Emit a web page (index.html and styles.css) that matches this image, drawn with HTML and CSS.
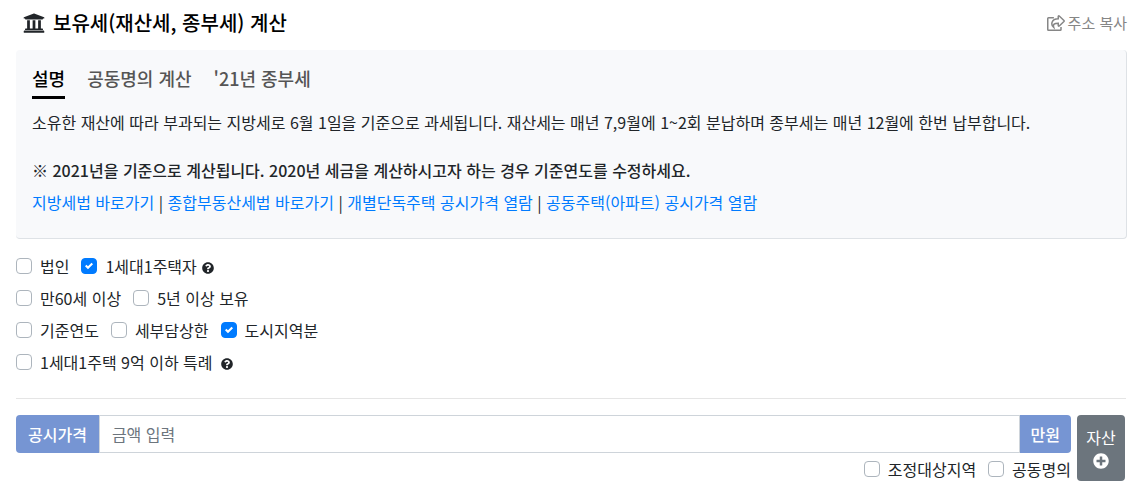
FILE: index.html
```
<!DOCTYPE html>
<html lang="ko">
<head>
<meta charset="utf-8">
<meta name="viewport" content="width=device-width, initial-scale=1">
<title>보유세(재산세, 종부세) 계산</title>
<link rel="stylesheet" href="styles.css">
</head>
<body>
<svg class="sprite" aria-hidden="true">
  <symbol id="help" viewBox="0 0 512 512"><path d="M504 256c0 136.997-111.043 248-248 248S8 392.997 8 256C8 119.083 119.043 8 256 8s248 111.083 248 248zM262.655 90c-54.497 0-89.255 22.957-116.549 63.758-3.536 5.286-2.353 12.415 2.715 16.258l34.699 26.31c5.205 3.947 12.621 3.008 16.665-2.122 17.864-22.658 30.113-35.797 57.303-35.797 20.429 0 45.698 13.148 45.698 32.958 0 14.976-12.363 22.667-32.534 33.976C247.128 238.528 216 254.941 216 296v4c0 6.627 5.373 12 12 12h56c6.627 0 12-5.373 12-12v-1.333c0-28.462 83.186-29.647 83.186-106.667 0-58.002-60.165-102-116.531-102zM256 338c-25.365 0-46 20.635-46 46 0 25.364 20.635 46 46 46s46-20.636 46-46c0-25.365-20.635-46-46-46z"/></symbol>
</svg>
<header class="header">
  <h1 class="title">
    <svg class="title-icon" viewBox="0 0 512 512" aria-hidden="true"><path d="M496 128v16a8 8 0 0 1-8 8h-24v12c0 6.627-5.373 12-12 12H60c-6.627 0-12-5.373-12-12v-12H24a8 8 0 0 1-8-8v-16a8 8 0 0 1 4.941-7.392l232-88a7.996 7.996 0 0 1 6.118 0l232 88A8 8 0 0 1 496 128zm-24 304H40c-13.255 0-24 10.745-24 24v16a8 8 0 0 0 8 8h464a8 8 0 0 0 8-8v-16c0-13.255-10.745-24-24-24zM96 192v192H60c-6.627 0-12 5.373-12 12v20h416v-20c0-6.627-5.373-12-12-12h-36V192h-64v192h-64V192h-64v192h-64V192H96z"/></svg>
    보유세(재산세, 종부세) 계산
  </h1>
  <button class="copy" type="button">
    <svg class="copy-icon" viewBox="0 0 576 512" aria-hidden="true"><path d="M220 88H48a24 24 0 0 0-24 24v352a24 24 0 0 0 24 24h376a24 24 0 0 0 24-24v-84M360 48c0-20 18-28 32-16l150 142c12 12 12 24 0 36L392 352c-14 12-32 4-32-16v-72c-130 0-176 28-144 136-100-80-90-272 144-280z"/></svg>
    주소 복사
  </button>
</header>
<main>
  <section class="card">
    <nav class="tabs">
      <a class="tab tab-active" href="#info">설명</a>
      <a class="tab" href="#joint">공동명의 계산</a>
      <a class="tab" href="#tax21">'21년 종부세</a>
    </nav>
    <div id="info">
      <p class="text">소유한 재산에 따라 부과되는 지방세로 6월 1일을 기준으로 과세됩니다. 재산세는 매년 7,9월에 1~2회 분납하며 종부세는 매년 12월에 한번 납부합니다.</p>
      <p class="text notice">※ 2021년을 기준으로 계산됩니다. 2020년 세금을 계산하시고자 하는 경우 기준연도를 수정하세요.</p>
      <p class="text links"><a href="#law1">지방세법 바로가기</a> | <a href="#law2">종합부동산세법 바로가기</a> | <a href="#price1">개별단독주택 공시가격 열람</a> | <a href="#price2">공동주택(아파트) 공시가격 열람</a></p>
    </div>
  </section>
  <form class="form">
    <div class="options">
      <div class="row">
        <label class="check"><input type="checkbox">법인</label>
        <label class="check"><input type="checkbox" checked>1세대1주택자<svg class="help" role="img" aria-label="도움말"><use href="#help"/></svg></label>
      </div>
      <div class="row">
        <label class="check"><input type="checkbox">만60세 이상</label>
        <label class="check"><input type="checkbox">5년 이상 보유</label>
      </div>
      <div class="row">
        <label class="check"><input type="checkbox">기준연도</label>
        <label class="check"><input type="checkbox">세부담상한</label>
        <label class="check"><input type="checkbox" checked>도시지역분</label>
      </div>
      <div class="row">
        <label class="check"><input type="checkbox">1세대1주택 9억 이하 특례</label>
        <svg class="help help-apart" role="img" aria-label="도움말"><use href="#help"/></svg>
      </div>
    </div>
    <hr class="rule">
    <div class="asset">
      <div class="asset-fields">
        <div class="group">
          <label class="addon" for="price">공시가격</label>
          <input class="amount" id="price" type="text" placeholder="금액 입력">
          <span class="addon addon-end">만원</span>
        </div>
        <div class="row row-end">
          <label class="check"><input type="checkbox">조정대상지역</label>
          <label class="check"><input type="checkbox">공동명의</label>
        </div>
      </div>
      <button class="add" type="button">
        자산
        <svg class="add-icon" viewBox="0 0 512 512" aria-hidden="true"><path d="M256 8C119 8 8 119 8 256s111 248 248 248 248-111 248-248S393 8 256 8zm144 276c0 6.600-5.400 12-12 12h-92v92c0 6.600-5.400 12-12 12h-56c-6.600 0-12-5.400-12-12v-92h-92c-6.600 0-12-5.400-12-12v-56c0-6.600 5.400-12 12-12h92v-92c0-6.600 5.400-12 12-12h56c6.600 0 12 5.400 12 12v92h92c6.600 0 12 5.400 12 12v56z"/></svg>
      </button>
    </div>
  </form>
</main>
</body>
</html>
```
FILE: styles.css
```
* { box-sizing: border-box; }
body {
  margin: 0;
  padding: 0 10px 0 16px;
  background: #fff;
  color: #212529;
  font: 16px/24px "Noto Sans CJK KR", sans-serif;
}
button, input { font: inherit; }
.sprite { position: absolute; width: 0; height: 0; }
.header {
  display: flex;
  justify-content: space-between;
  align-items: center;
  height: 50px;
  padding-left: 7px;
  padding-bottom: 4px;
}
.title {
  display: flex;
  align-items: center;
  gap: 8px;
  margin: 0;
  color: #000;
  font-size: 20px;
  font-weight: 500;
}
.title-icon { width: 22px; height: 22px; fill: #212529; }
.copy {
  display: flex;
  align-items: center;
  gap: 3px;
  padding: 0;
  border: 0;
  background: none;
  color: #868686;
  font-size: 15px;
  cursor: pointer;
}
.copy-icon {
  width: 18px;
  height: 16px;
  fill: none;
  stroke: #868686;
  stroke-width: 48;
}
.card {
  padding: 16px 16px 24px;
  border: solid #dee2e6;
  border-width: 0 1px 1px 0;
  border-radius: 4px;
  background: #f8f9fb;
}
.tabs { display: flex; gap: 22px; margin-bottom: 11px; }
.tab {
  padding-bottom: 6px;
  border-bottom: 3px solid transparent;
  color: #555;
  font-size: 18px;
  font-weight: 500;
  text-decoration: none;
}
.tab-active { border-color: #000; color: #000; }
.text { margin: 0; }
.notice { margin: 24px 0 8px; font-weight: 500; }
.links { color: #212529; }
.links a { color: #007bff; text-decoration: none; }
.options { display: grid; gap: 8px; padding-top: 15px; }
.row { display: flex; align-items: center; gap: 12px; }
.row-end { justify-content: flex-end; padding-top: 4px; }
.check { display: flex; align-items: center; }
.check input {
  appearance: none;
  width: 16px;
  height: 16px;
  margin: 0 8px 0 0;
  border: 1px solid #adb5bd;
  border-radius: 4px;
  background: #fff;
}
.check input:checked {
  border-color: #007bff;
  background: #007bff url("data:image/svg+xml,%3Csvg xmlns='http://www.w3.org/2000/svg' viewBox='0 0 8 8'%3E%3Cpath fill='%23fff' d='M6.564.75l-3.59 3.612-1.538-1.550L0 4.260l2.974 2.990L8 2.193z'/%3E%3C/svg%3E") center / 8px 8px no-repeat;
}
.help { width: 12px; height: 12px; margin: 3px 0 0 5px; fill: #212529; }
.help-apart { margin-left: -4px; }
.rule { margin: 24px 1px 16px 0; border: 0; border-top: 1px solid #e5e5e5; }
.asset { display: flex; gap: 6px; padding-right: 2px; }
.asset-fields { flex: 1; min-width: 0; }
.group { display: flex; height: 38px; }
.addon {
  display: flex;
  align-items: center;
  padding: 0 12px;
  border-radius: 4px 0 0 4px;
  background: #7695d3;
  color: #fff;
  font-weight: 500;
}
.addon-end { padding: 0 11px; border-radius: 0 4px 4px 0; }
.amount {
  flex: 1;
  min-width: 0;
  padding: 6px 12px;
  border: 1px solid #ced4da;
  color: #495057;
}
.amount::placeholder { color: #6c757d; opacity: 1; }
.add {
  display: flex;
  flex-direction: column;
  align-items: center;
  justify-content: center;
  gap: 4px;
  width: 48px;
  padding: 0 0 2px;
  border: 0;
  border-radius: 4px;
  background: #6c757d;
  color: #fff;
  cursor: pointer;
}
.add-icon { width: 16px; height: 16px; fill: #fff; }
```
